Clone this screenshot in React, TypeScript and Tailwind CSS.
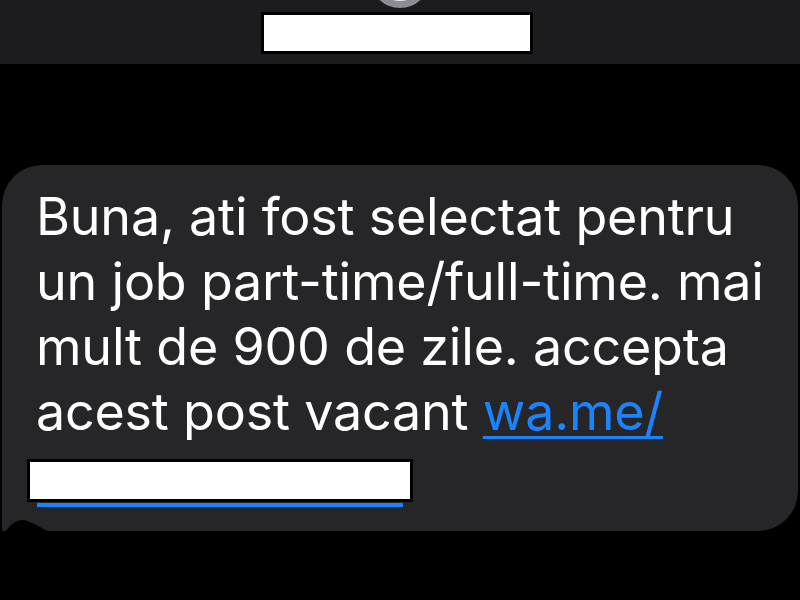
export default function App() {
  return (
    <div className="w-[800px] h-[600px] bg-black overflow-hidden font-['Inter',sans-serif]">
      {/* Top bar with contact */}
      <div className="relative h-[64px] bg-[#1c1c1e] flex justify-center items-start">
        <div className="absolute left-[370px] top-[-52px] w-[60px] h-[60px] rounded-full bg-[#e9e9ee] border-[7px] border-[#8d8d93]" />
        <div className="mt-[12px] ml-[-6px] w-[272px] h-[42px] bg-white border-[3px] border-black" />
      </div>

      {/* Message bubble */}
      <div className="pt-[101px] px-[2px]">
        <div className="relative bg-[#262629] rounded-[40px] rounded-bl-none h-[366px] pt-[19px] pl-[34px] text-white text-[52px] leading-[65px] tracking-[-0.2px]">
          <p>Buna, ati fost selectat pentru</p>
          <p>un job part-time/full-time. mai</p>
          <p>mult de 900 de zile. accepta</p>
          <p>
            acest post vacant{" "}
            <span className="text-[#1a84ff] underline decoration-[3px] underline-offset-[6px]">wa.me/</span>
          </p>
          <div className="mt-[15px] ml-[-9px] w-[386px] h-[43px] bg-white border-[3px] border-black" />
          <div className="ml-[1px] mt-[1px] w-[366px] h-[4px] bg-[#1a84ff]" />
          {/* tail notch */}
          <svg className="absolute left-0 bottom-0" width="50" height="12" viewBox="0 0 50 12">
            <path d="M4 12 C8 6 14 1 20 1 C28 1 36 8 46 12 Z" fill="#000" />
          </svg>
        </div>
      </div>
    </div>
  );
}
